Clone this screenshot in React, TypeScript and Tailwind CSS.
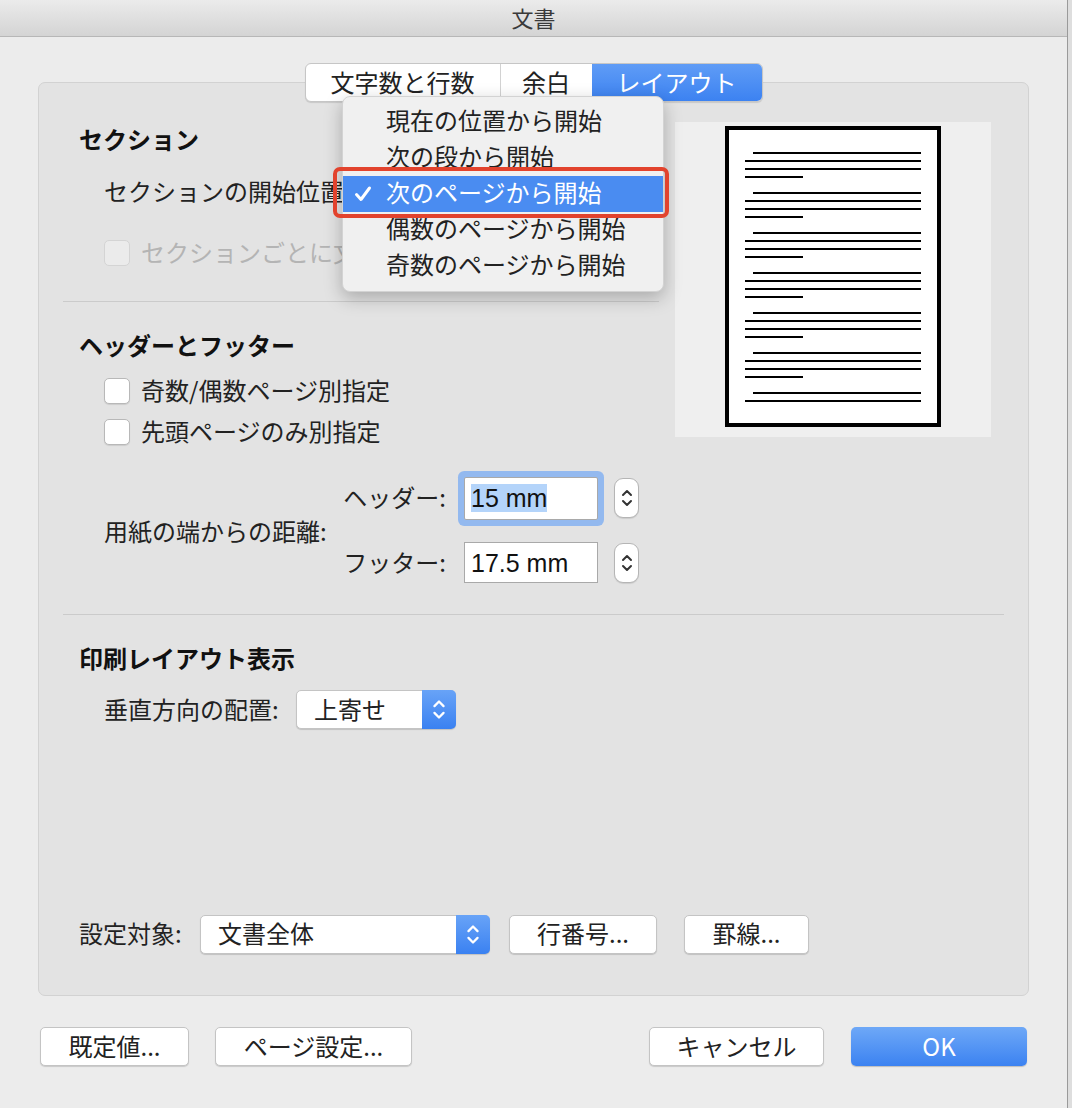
import clsx from 'clsx';

const jp = "font-['Noto_Sans_CJK_JP','Noto_Sans',sans-serif]";
const latin = "font-['Liberation_Sans','Noto_Sans',sans-serif]";

function UpDown({ color = 'white', w = 14, h = 22 }: { color?: string; w?: number; h?: number }) {
  return (
    <svg width={w} height={h} viewBox="0 0 14 22" fill="none" stroke={color} strokeWidth="2" strokeLinecap="round" strokeLinejoin="round">
      <path d="M3 8 L7 4 L11 8" />
      <path d="M3 14 L7 18 L11 14" />
    </svg>
  );
}

function Button({ children, className, primary }: { children: React.ReactNode; className?: string; primary?: boolean }) {
  return (
    <div
      className={clsx(
        'flex h-[39px] items-center justify-center rounded-[5px] pb-[2px] text-[24px] leading-none',
        primary
          ? 'bg-linear-to-b from-[#6ea8f7] to-[#3b82f1] text-white shadow-[0_1px_1px_rgba(0,0,0,0.2)]'
          : 'border border-[#c4c4c4] bg-white text-[#222] shadow-[0_1px_1px_rgba(0,0,0,0.15)]',
        className
      )}
    >
      {children}
    </div>
  );
}

function Popup({ value, className }: { value: string; className?: string }) {
  return (
    <div className={clsx('flex h-[39px] rounded-[5px] border border-[#c4c4c4] bg-white shadow-[0_1px_1px_rgba(0,0,0,0.15)]', className)}>
      <div className="flex flex-1 items-center pb-[2px] pl-[17px] text-[24px] leading-none text-[#222]">{value}</div>
      <div className="-my-px -mr-px flex w-[34px] items-center justify-center rounded-r-[5px] bg-linear-to-b from-[#68a3f7] to-[#3a81f1]">
        <UpDown w={16} h={25} />
      </div>
    </div>
  );
}

function Checkbox({ label, disabled }: { label: string; disabled?: boolean }) {
  return (
    <div className="ml-[41px] flex h-[32px] items-center gap-[11px]">
      <div
        className={clsx(
          'h-[26px] w-[26px] shrink-0 rounded-[5px] border',
          disabled ? 'border-[#d4d4d4] bg-[#ebebeb]' : 'border-[#b8b8b8] bg-white shadow-[0_1px_1px_rgba(0,0,0,0.1)]'
        )}
      />
      <span
        className={clsx(
          'whitespace-nowrap pb-[2px] text-[24px] leading-none',
          disabled ? 'w-[202px] overflow-hidden text-[#b4b4b4]' : 'text-[#222]'
        )}
      >
        {label}
      </span>
    </div>
  );
}

function Stepper() {
  return (
    <div className="ml-[16px] flex h-[40px] w-[25px] items-center justify-center rounded-[9px] border border-[#b5b5b5] bg-white shadow-[0_1px_1px_rgba(0,0,0,0.1)]">
      <UpDown color="#333" w={14} h={28} />
    </div>
  );
}

function PagePreview() {
  const lines: { x: number; y: number; w: number }[] = [];
  for (let g = 0; g < 7; g++) {
    const base = 22 + g * 40;
    lines.push({ x: 24, y: base, w: 168 });
    lines.push({ x: 16, y: base + 8, w: 176 });
    if (g < 6) {
      lines.push({ x: 16, y: base + 16, w: 176 });
      lines.push({ x: 16, y: base + 24, w: 58 });
    }
  }
  return (
    <div className="ml-[16px] mt-[39px] flex h-[315px] w-[316px] justify-center bg-[#efefef] pt-[4px]">
      <div className="h-[301px] w-[216px] border-[4px] border-black bg-white">
        <svg width="208" height="293" viewBox="0 0 208 293">
          {lines.map((l, i) => (
            <rect key={i} x={l.x} y={l.y} width={l.w} height={2} fill="#000" />
          ))}
        </svg>
      </div>
    </div>
  );
}

const menuItems = ['現在の位置から開始', '次の段から開始', '次のページから開始', '偶数のページから開始', '奇数のページから開始'];

export default function App() {
  return (
    <div className={clsx('flex h-[1108px] w-[1072px] bg-[#dedede] text-[#222]', jp)}>
      <div className="relative flex h-full w-[1068px] flex-col border-r border-[#9a9a9a] bg-[#ececec]">
        {/* title bar */}
        <div className="flex h-[37px] items-center justify-center border-b border-[#b7b7b7] bg-linear-to-b from-[#ebebeb] to-[#d4d4d4] pb-[3px] text-[22px] leading-none text-[#3a3a3a]">
          文書
        </div>

        <div className="flex flex-col px-[38px]">
          {/* tabs */}
          <div className="relative z-10 mt-[26px] flex justify-center">
            <div className="flex h-[39px] overflow-hidden rounded-[6px] border border-[#c6c6c6] bg-white text-[24px] leading-none shadow-[0_1px_1px_rgba(0,0,0,0.12)]">
              <div className="flex w-[195px] items-center justify-center border-r border-[#d2d2d2] pb-[2px]">文字数と行数</div>
              <div className="flex w-[91px] items-center justify-center pb-[2px]">余白</div>
              <div className="flex w-[170px] items-center justify-center bg-linear-to-b from-[#5f9cf6] to-[#3c82f1] pb-[2px] text-white">レイアウト</div>
            </div>
          </div>

          {/* group box */}
          <div className="-mt-[20px] flex h-[914px] flex-col rounded-[7px] border border-[#d2d2d2] bg-[#e3e3e3] px-[24px] pb-[41px]">
            <div className="flex">
              <div className="flex w-[596px] flex-col pt-[41px]">
                <div className="ml-[16px] flex h-[32px] items-center pb-[2px] text-[24px] font-bold leading-none text-[#111]">セクション</div>
                <div className="ml-[41px] mt-[16px] flex h-[40px] items-center pb-[2px] text-[24px] leading-none">セクションの開始位置:</div>
                <div className="mt-[25px]">
                  <Checkbox label="セクションごとに文字数を設定" disabled />
                </div>
                <div className="mt-[32px] h-px bg-[#cbcbcb]" />
                <div className="ml-[16px] mt-[28px] flex h-[32px] items-center pb-[2px] text-[24px] font-bold leading-none text-[#111]">ヘッダーとフッター</div>
                <div className="mt-[13px]">
                  <Checkbox label="奇数/偶数ページ別指定" />
                </div>
                <div className="mt-[9px]">
                  <Checkbox label="先頭ページのみ別指定" />
                </div>

                {/* distance */}
                <div className="ml-[41px] mt-[22px] flex items-center">
                  <div className="w-[227px] pt-[9px] text-[24px] leading-none">用紙の端からの距離:</div>
                  <div className="flex flex-col">
                    <div className="flex h-[56px] items-center">
                      <div className="w-[115px] pb-[2px] text-right text-[24px] leading-none">ヘッダー:</div>
                      <div className="ml-[18px] flex h-[43px] w-[134px] items-center rounded-[2px] border border-[#a9a9a9] bg-white pl-[6px] ring-[6px] ring-[#93b9ef]">
                        <span className={clsx('bg-[#b4d4fa] text-[25px] leading-[28px] text-[#111]', latin)}>15 mm</span>
                      </div>
                      <Stepper />
                    </div>
                    <div className="mt-[16px] flex h-[41px] items-center">
                      <div className="w-[115px] pb-[2px] text-right text-[24px] leading-none">フッター:</div>
                      <div className="ml-[18px] flex h-[41px] w-[134px] items-center border border-[#a9a9a9] bg-white pl-[6px]">
                        <span className={clsx('text-[25px] leading-[28px] text-[#111]', latin)}>17.5 mm</span>
                      </div>
                      <Stepper />
                    </div>
                  </div>
                </div>
              </div>
              <PagePreview />
            </div>

            <div className="mt-[31px] h-px bg-[#cbcbcb]" />

            <div className="ml-[16px] mt-[28px] flex h-[32px] items-center pb-[2px] text-[24px] font-bold leading-none text-[#111]">印刷レイアウト表示</div>
            <div className="ml-[41px] mt-[15px] flex h-[39px] items-center">
              <span className="w-[192px] pb-[2px] text-[24px] leading-none">垂直方向の配置:</span>
              <Popup value="上寄せ" className="w-[160px]" />
            </div>

            <div className="flex-1" />

            <div className="ml-[16px] flex h-[40px] items-center">
              <span className="w-[121px] pb-[2px] text-[24px] leading-none">設定対象:</span>
              <Popup value="文書全体" className="w-[290px]" />
              <Button className="ml-[19px] w-[148px]">行番号...</Button>
              <Button className="ml-[27px] w-[125px]">罫線...</Button>
            </div>
          </div>

          {/* bottom buttons */}
          <div className="mt-[31px] flex items-center justify-between px-[2px]">
            <div className="flex gap-[26px]">
              <Button className="w-[149px]">既定値...</Button>
              <Button className="w-[197px]">ページ設定...</Button>
            </div>
            <div className="flex gap-[27px]">
              <Button className="w-[175px]">キャンセル</Button>
              <Button primary className="w-[176px]">OK</Button>
            </div>
          </div>
        </div>

        {/* open popup menu */}
        <div className="absolute left-[342px] top-[96px] z-20 h-[196px] w-[322px] rounded-[8px] border border-[#d3d3d3] bg-[#f0f0f0] pt-[7px] shadow-[0_6px_18px_rgba(0,0,0,0.25)]">
          {menuItems.map((item, i) => (
            <div
              key={item}
              className={clsx(
                'relative flex h-[36px] items-center pb-[5px] pl-[43px] text-[24px] leading-none',
                i === 2 ? 'bg-[#4a8cf1] text-white' : 'text-[#222]'
              )}
            >
              {i === 2 && (
                <svg className="absolute left-[11px] top-[9px]" width="18" height="18" viewBox="0 0 18 18" fill="none" stroke="white" strokeWidth="3" strokeLinecap="round" strokeLinejoin="round">
                  <path d="M2.5 9.5 L7 14.5 L15.5 3" />
                </svg>
              )}
              {item}
            </div>
          ))}
        </div>

        {/* red highlight */}
        <div className="absolute left-[333px] top-[167px] z-30 h-[51px] w-[336px] rounded-[7px] border-[4px] border-[#e2432d]" />
      </div>
    </div>
  );
}
